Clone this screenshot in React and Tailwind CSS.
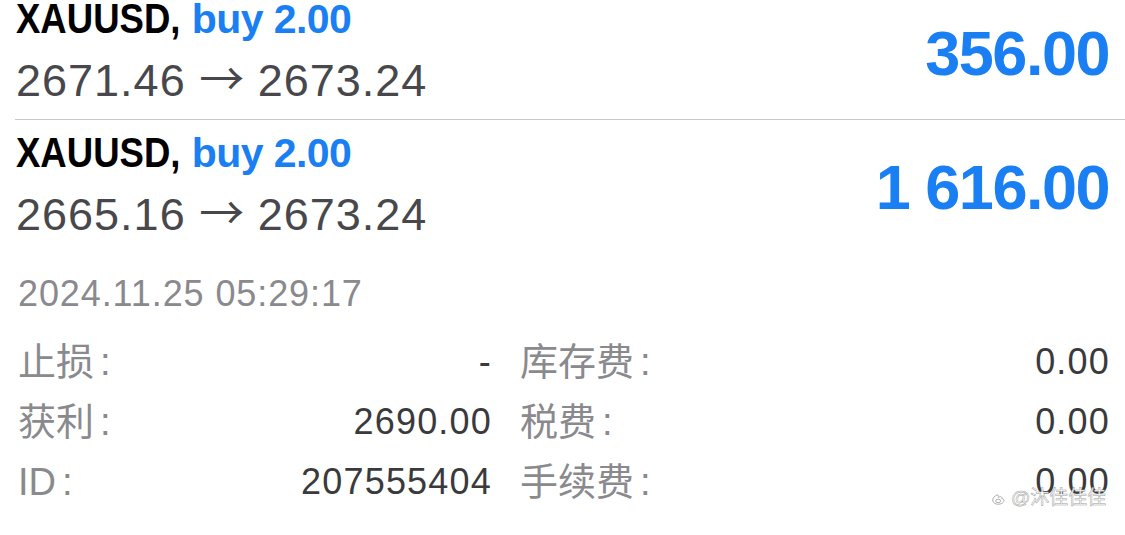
import React from "react";

function TradeRow({ from, to, amount }) {
  return (
    <div className="flex items-center justify-between pl-[16px] pr-[16px]">
      <div>
        <div className="text-[41px] leading-[38px] font-bold whitespace-nowrap">
          <span className="inline-block origin-left scale-x-[0.87] mr-[-24px] text-black text-[42px]">XAUUSD,</span>
          <span className="text-[#1a7ff2] tracking-[-0.6px]"> buy 2.00</span>
        </div>
        <div className="mt-[18px] h-[50px] text-[45px] leading-[50px] tracking-[1px] text-[#48484c] whitespace-nowrap">
          {from} <span className="font-['Noto_Sans_CJK_SC',sans-serif] leading-[0px] tracking-normal">→</span> {to}
        </div>
      </div>
      <div className="text-[63px] leading-none font-bold tracking-[-1.5px] text-[#1a7ff2] whitespace-nowrap">
        {amount}
      </div>
    </div>
  );
}

function Cell({ label, value }) {
  return (
    <div className="flex h-[60px] items-center justify-between">
      <span className="text-[38px] leading-[60px] text-[#8a8a8e] whitespace-nowrap">
        {label}
        <span className="ml-[6px]">:</span>
      </span>
      <span className="text-[36px] leading-[60px] tracking-[1.2px] text-[#3a3a3c]">{value}</span>
    </div>
  );
}

export default function App() {
  return (
    <div className="relative w-[1125px] h-[535px] overflow-hidden bg-white font-['Liberation_Sans','Noto_Sans_CJK_SC',sans-serif]">
      <div className="pb-[13px]">
        <TradeRow from="2671.46" to="2673.24" amount="356.00" />
      </div>
      <div className="ml-[15px] h-px bg-[#c8c8cc]" />
      <div className="pt-[14px]">
        <TradeRow from="2665.16" to="2673.24" amount="1 616.00" />
      </div>
      <div className="mt-[34px] pl-[18px] text-[36px] leading-[40px] tracking-[0.9px] text-[#8a8a8e]">
        2024.11.25 05:29:17
      </div>
      <div className="mt-[18px] grid grid-cols-[474px_1fr] gap-x-[28px] pl-[18px] pr-[15px]">
        <Cell label="止损" value="-" />
        <Cell label="库存费" value="0.00" />
        <Cell label="获利" value="2690.00" />
        <Cell label="税费" value="0.00" />
        <Cell label="ID" value="207555404" />
        <Cell label="手续费" value="0.00" />
      </div>
      <div className="absolute left-[991px] top-[487px] flex items-center gap-[5px]">
        <svg width="15" height="15" viewBox="0 0 16 16" fill="none" stroke="#a8a8a8" strokeWidth="1">
          <path d="M6.5 4.2C3.8 5.2 1.6 7.6 1.8 10.2c0.2 2.6 3.2 4.2 6.4 3.9 3.4-0.3 5.9-2.3 5.6-4.4-0.2-1.2-1.4-1.8-2.4-1.5 0.4-1.2 0.1-2.1-1.2-2.1-0.8 0-1.8 0.4-2.4 0.7 0.4-1.3 0.2-2.9-1.3-2.6z" />
          <ellipse cx="7.6" cy="10.6" rx="2.6" ry="1.9" />
        </svg>
        <span className="text-[19px] leading-[22px] text-white [-webkit-text-stroke:0.5px_#a0a0a0] whitespace-nowrap">
          @沐佳佳佳
        </span>
      </div>
    </div>
  );
}
